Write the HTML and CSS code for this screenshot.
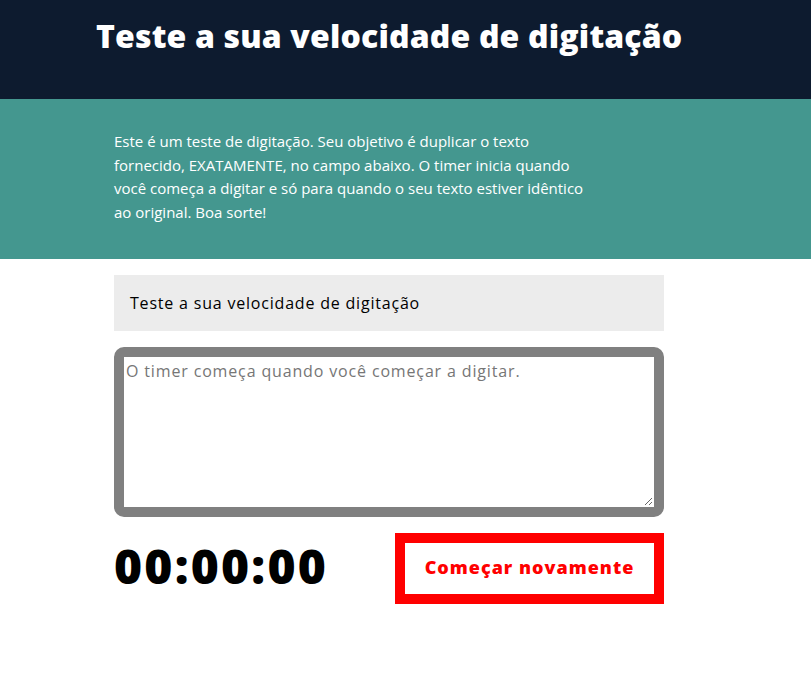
FILE: index.html
```html
<!DOCTYPE html>
<html lang="pt-BR">
<head>
<meta charset="utf-8">
<title>Teste de digitação</title>
<link rel="stylesheet" href="styles.css">
</head>
<body>
<header class="masthead">
  <h1 class="masthead-title">Teste a sua velocidade de digitação</h1>
</header>
<section class="intro">
  <p class="intro-text">Este é um teste de digitação. Seu objetivo é duplicar o texto<br>fornecido, EXATAMENTE, no campo abaixo. O timer inicia quando<br>você começa a digitar e só para quando o seu texto estiver idêntico<br>ao original. Boa sorte!</p>
</section>
<main class="test">
  <div class="origin-text">Teste a sua velocidade de digitação</div>
  <div class="test-wrapper">
    <textarea class="test-area" placeholder="O timer começa quando você começar a digitar."></textarea>
  </div>
  <div class="meta">
    <div class="timer">00:00:00</div>
    <button class="reset">Começar novamente</button>
  </div>
</main>
</body>
</html>
```
FILE: styles.css
```css
* { box-sizing: border-box; }
body {
  margin: 0;
  font-family: "Open Sans", "Noto Sans", sans-serif;
  background: #fff;
  color: #000;
}
.masthead {
  background: #0d1b2f;
  height: 99px;
  padding: 14px 0 0 96px;
}
.masthead-title {
  margin: 0;
  color: #fff;
  font-size: 32px;
  font-weight: 800;
  line-height: 44px;
  letter-spacing: 0.15px;
}
.intro {
  background: #44978f;
  height: 160px;
  padding: 31px 0 0 114px;
}
.intro-text {
  margin: 0;
  color: #fff;
  font-size: 15px;
  line-height: 23.7px;
}
.test {
  width: 550px;
  margin: 16px 0 0 114px;
}
.origin-text {
  background: #ececec;
  height: 56px;
  padding: 0 16px;
  display: flex;
  align-items: center;
  font-size: 16px;
  letter-spacing: 0.8px;
}
.test-wrapper {
  margin-top: 16px;
  border: 10px solid #808080;
  border-radius: 10px;
  height: 170px;
  display: flex;
}
.test-area {
  flex: 1;
  margin: 0;
  border: 1px solid #fff;
  padding: 2px 1px;
  font-family: inherit;
  font-size: 16px;
  letter-spacing: 0.85px;
  color: #000;
  resize: vertical;
  outline: none;
}
.test-area::placeholder { color: #767676; }
.meta {
  margin-top: 16px;
  display: flex;
  justify-content: space-between;
  align-items: flex-start;
}
.timer {
  font-size: 48px;
  font-weight: 800;
  line-height: 66px;
  letter-spacing: 2.2px;
}
.reset {
  width: 269px;
  height: 71px;
  border: 10px solid #ff0000;
  background: #fff;
  color: #ff0000;
  font-family: inherit;
  font-size: 18px;
  font-weight: 800;
  letter-spacing: 1px;
  padding: 0 0 3px;
}
```
